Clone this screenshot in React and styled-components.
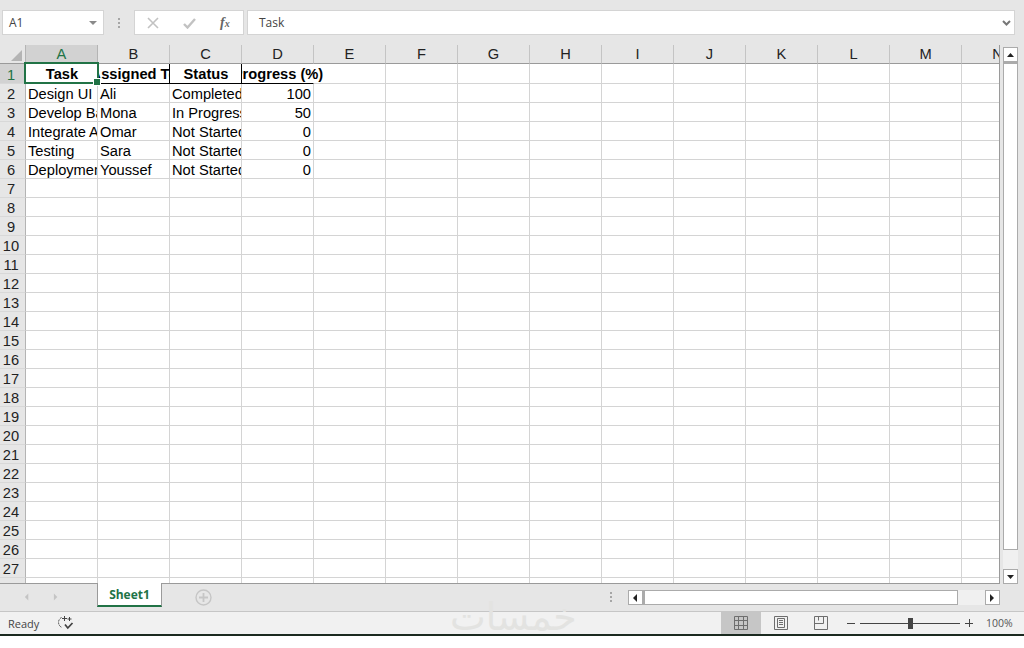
import React from 'react';
import styled, { createGlobalStyle } from 'styled-components';

const GlobalStyle = createGlobalStyle`
  html, body {
    margin: 0;
    padding: 0;
    background: #fff;
    overflow: hidden;
  }
  * { box-sizing: border-box; }
`;

const Window = styled.div`
  position: relative;
  width: 1024px;
  height: 648px;
  display: flex;
  flex-direction: column;
  background: #fff;
  font-family: "Liberation Sans", Arial, sans-serif;
`;

/* formula bar */
const FormulaBar = styled.div`
  height: 45px;
  flex: none;
  display: flex;
  padding: 10px 9px 10px 2px;
  background: #e6e6e6;
  font-family: "Open Sans", sans-serif;
  font-size: 12px;
  color: #444;
`;

const BarBox = styled.div`
  height: 25px;
  display: flex;
  align-items: center;
  background: #fff;
  border: 1px solid #d4d4d4;
`;

const NameBox = styled(BarBox)`
  width: 102px;
  justify-content: space-between;
  padding: 0 6px 0 6px;
`;

const Grip = styled.div`
  width: 30px;
  display: flex;
  align-items: center;
  justify-content: center;
`;

const FxBox = styled(BarBox)`
  width: 110px;
  margin-right: 3px;
  padding-left: 12px;
`;

const FxButton = styled.div`
  width: 36px;
  display: flex;
  align-items: center;
`;

const FxLabel = styled.span`
  font-family: "Liberation Serif", serif;
  font-style: italic;
  font-weight: 700;
  font-size: 14px;
  color: #666;
  margin-left: 1px;

  small {
    font-size: 10px;
  }
`;

const FormulaInput = styled(BarBox)`
  flex: 1;
  justify-content: space-between;
  padding: 0 3px 0 11px;
`;

/* sheet */
const SheetRow = styled.div`
  height: 539px;
  flex: none;
  display: flex;
  background: #e6e6e6;
`;

const Sheet = styled.div`
  width: 1000px;
  height: 539px;
  overflow: hidden;
  display: grid;
  grid-template-columns: 26px repeat(14, 72px);
  grid-template-rows: 19px 20px repeat(27, 19px);
  align-content: start;
  background: #fff;
  border-right: 1px solid #9a9a9a;
  border-bottom: 1px solid #9a9a9a;
  font-size: 14.67px;
  color: #000;
`;

const Corner = styled.div`
  background: #e6e6e6;
  border-right: 1px solid #b4b4b4;
  border-bottom: 1px solid #9a9a9a;
  display: flex;
  align-items: flex-end;
  justify-content: flex-end;
  padding: 0 3px 2px 0;
`;

const ColHead = styled.div`
  background: ${p => (p.$active ? '#d2d2d2' : '#e6e6e6')};
  color: ${p => (p.$active ? '#217346' : '#222')};
  border-right: 1px solid ${p => (p.$active ? '#b4b4b4' : '#c4c4c4')};
  border-bottom: 1px solid #9a9a9a;
  display: flex;
  align-items: center;
  justify-content: center;
  white-space: nowrap;
`;

const RowHead = styled.div`
  background: ${p => (p.$active ? '#d2d2d2' : '#e6e6e6')};
  color: ${p => (p.$active ? '#217346' : '#222')};
  border-right: 1px solid #b4b4b4;
  border-bottom: 1px solid #d8d8d8;
  display: flex;
  align-items: center;
  justify-content: center;
  padding: 2px 3px 0 0;
  overflow: hidden;
`;

const Cell = styled.div`
  display: flex;
  align-items: center;
  justify-content: ${p => (p.$head ? 'center' : p.$right ? 'flex-end' : 'flex-start')};
  padding: 0 2px;
  white-space: nowrap;
  overflow: ${p => (p.$spill ? 'visible' : 'hidden')};
  clip-path: ${p => (p.$spill ? 'inset(0 -60px 0 0)' : 'none')};
  font-weight: ${p => (p.$head ? 700 : 400)};
  border-right: 1px solid ${p => (p.$spill ? 'transparent' : p.$head ? '#000' : '#d4d4d4')};
  border-bottom: 1px solid ${p => (p.$head ? '#000' : '#d4d4d4')};
`;

const CellText = styled.span`
  flex: none;
  padding-left: ${p => (p.$head ? 1 : 0)}px;
  padding-top: ${p => (p.$head ? 0 : 1)}px;
`;

const Selection = styled.div`
  position: absolute;
  left: 24px;
  top: 62px;
  width: 75px;
  height: 22px;
  border: 2px solid #217346;
  pointer-events: none;

  &::after {
    content: '';
    position: absolute;
    right: -4px;
    bottom: -4px;
    width: 6px;
    height: 6px;
    background: #217346;
    border: 1px solid #fff;
  }
`;

/* vertical scrollbar */
const VScroll = styled.div`
  flex: 1;
  display: flex;
  flex-direction: column;
  padding: 2px 6px 0 3px;
`;

const ScrollButton = styled.div`
  width: 15px;
  height: 15px;
  flex: none;
  display: flex;
  align-items: center;
  justify-content: center;
  background: #fff;
  border: 1px solid #ababab;
`;

const VThumb = styled.div`
  height: 488px;
  flex: none;
  background: #fff;
  border: 1px solid #ababab;
  border-top-width: 2px;
`;

const VTrack = styled.div`
  flex: 1;
  background: #f0f0f0;
`;

/* tabs */
const TabBar = styled.div`
  height: 28px;
  flex: none;
  display: flex;
  background: #e6e6e6;
  border-bottom: 1px solid #c6c6c6;
`;

const TabNav = styled.div`
  width: 97px;
  flex: none;
  display: flex;
  align-items: center;
  padding: 0 0 2px 24px;
  gap: 23px;
`;

const Tab = styled.div`
  width: 65px;
  height: 24px;
  margin-top: -1px;
  flex: none;
  display: flex;
  align-items: center;
  justify-content: center;
  background: #fff;
  border-left: 1px solid #9a9a9a;
  border-right: 1px solid #9a9a9a;
  border-bottom: 2px solid #217346;
  color: #217346;
  font-family: "Open Sans", sans-serif;
  font-size: 12px;
  font-weight: 700;
`;

const AddSheet = styled.div`
  margin-left: 33px;
  display: flex;
  align-items: center;
  padding-bottom: 1px;
`;

const TabSplit = styled.div`
  margin-left: 391px;
  width: 16px;
  display: flex;
  align-items: center;
  justify-content: center;
  padding-bottom: 1px;
`;

const HScroll = styled.div`
  margin-left: 9px;
  width: 372px;
  height: 15px;
  margin-top: 6px;
  display: flex;
`;

const HThumb = styled.div`
  width: 315px;
  flex: none;
  background: #fff;
  border: 1px solid #ababab;
  border-left-width: 2px;
`;

const HTrack = styled.div`
  flex: 1;
  background: #f0f0f0;
`;

/* status bar */
const StatusBar = styled.div`
  position: relative;
  height: 22px;
  flex: none;
  display: flex;
  align-items: center;
  background: #f1f1f1;
  font-family: "Open Sans", sans-serif;
  font-size: 11px;
  color: #444;
`;

const Ready = styled.span`
  margin-left: 8px;
  width: 49px;
`;

const Watermark = styled.span`
  position: absolute;
  left: 450px;
  top: -12px;
  height: 34px;
  overflow: hidden;
  font-family: "DejaVu Sans", sans-serif;
  font-size: 38px;
  line-height: 34px;
  color: #e3e3e1;
`;

const Views = styled.div`
  margin-left: auto;
  display: flex;
  align-items: stretch;
  height: 22px;
`;

const ViewButton = styled.div`
  width: 40px;
  display: flex;
  align-items: center;
  justify-content: center;
  padding-bottom: 1px;
  background: ${p => (p.$active ? '#c6c6c6' : 'transparent')};
`;

const Zoomer = styled.div`
  display: flex;
  align-items: center;
  margin-left: 6px;
  gap: 5px;
`;

const Slider = styled.div`
  position: relative;
  width: 100px;
  height: 1px;
  background: #444;
`;

const SliderKnob = styled.div`
  position: absolute;
  left: 48px;
  top: -5px;
  width: 5px;
  height: 11px;
  background: #444;
`;

const ZoomValue = styled.span`
  width: 38px;
  margin-left: 13px;
  font-size: 10.5px;
  color: #555;
`;

const BottomEdge = styled.div`
  height: 2px;
  flex: none;
  background: #1b2a20;
`;

const columns = ['A', 'B', 'C', 'D', 'E', 'F', 'G', 'H', 'I', 'J', 'K', 'L', 'M', 'N'];

const header = ['Task', 'Assigned To', 'Status', 'Progress (%)'];

const rows = [
  ['Design UI', 'Ali', 'Completed', 100],
  ['Develop Backend', 'Mona', 'In Progress', 50],
  ['Integrate API', 'Omar', 'Not Started', 0],
  ['Testing', 'Sara', 'Not Started', 0],
  ['Deployment', 'Youssef', 'Not Started', 0],
];

const Triangle = ({ dir, color = '#222', size = 7 }) => {
  const points = {
    up: '0,6 7,6 3.5,2',
    down: '0,2 7,2 3.5,6',
    left: '5,0 5,8 1,4',
    right: '1,0 1,8 5,4',
  };
  return (
    <svg width={size} height={8} viewBox="0 0 7 8">
      <polygon points={points[dir]} fill={color} />
    </svg>
  );
};

const Dots = () => (
  <svg width="2" height="10" viewBox="0 0 2 10">
    <rect x="0" y="0" width="2" height="2" fill="#a6a6a6" />
    <rect x="0" y="4" width="2" height="2" fill="#a6a6a6" />
    <rect x="0" y="8" width="2" height="2" fill="#a6a6a6" />
  </svg>
);

const MacroIcon = () => (
  <svg width="17" height="16" viewBox="0 0 17 16" fill="none" stroke="#444" strokeWidth="1">
    <path d="M4.5 2.5A5.5 5.5 0 0 0 5 12.5" strokeDasharray="2 1" />
    <path d="M7.5 1v5M5 3.5h5M12.5 2v4M10.5 4h4" />
    <path d="M8 9.5l2.8 3.5 4.7-5" strokeWidth="1.8" />
  </svg>
);

export default function App() {
  const cells = [];
  for (let r = 1; r <= 28; r++) {
    cells.push(<RowHead key={`h${r}`} $active={r === 1}>{r}</RowHead>);
    columns.forEach((c, i) => {
      let content = null;
      let props = {};
      if (r === 1 && i < 4) {
        content = header[i];
        props = { $head: true, $spill: i === 3 };
      } else if (r >= 2 && r <= 6 && i < 4) {
        content = rows[r - 2][i];
        props = { $right: i === 3 };
      }
      cells.push(
        <Cell key={`${c}${r}`} {...props}>
          {content !== null && <CellText $head={props.$head}>{content}</CellText>}
        </Cell>
      );
    });
  }

  return (
    <Window>
      <GlobalStyle />
      <FormulaBar>
        <NameBox>
          <span>A1</span>
          <svg width="8" height="4" viewBox="0 0 8 4"><polygon points="0,0 8,0 4,4" fill="#8a8a8a" /></svg>
        </NameBox>
        <Grip><Dots /></Grip>
        <FxBox>
          <FxButton>
            <svg width="12" height="12" viewBox="0 0 12 12" stroke="#c2c2c2" strokeWidth="1.6" fill="none">
              <path d="M1 1l10 10M11 1L1 11" />
            </svg>
          </FxButton>
          <FxButton>
            <svg width="13" height="12" viewBox="0 0 13 12" stroke="#c2c2c2" strokeWidth="2.4" fill="none">
              <path d="M1 7l3.5 3.5L12 2" />
            </svg>
          </FxButton>
          <FxLabel>f<small>x</small></FxLabel>
        </FxBox>
        <FormulaInput>
          <span>Task</span>
          <svg width="9" height="6" viewBox="0 0 9 6" stroke="#777" strokeWidth="2" fill="none">
            <path d="M1 1l3.5 3.5L8 1" />
          </svg>
        </FormulaInput>
      </FormulaBar>

      <SheetRow>
        <Sheet>
          <Corner>
            <svg width="11" height="11" viewBox="0 0 11 11"><polygon points="11,0 11,11 0,11" fill="#b4b4b4" /></svg>
          </Corner>
          {columns.map((c, i) => (
            <ColHead key={c} $active={i === 0}>{c}</ColHead>
          ))}
          {cells}
        </Sheet>
        <VScroll>
          <ScrollButton><Triangle dir="up" /></ScrollButton>
          <VThumb />
          <VTrack />
          <ScrollButton><Triangle dir="down" /></ScrollButton>
        </VScroll>
      </SheetRow>
      <Selection />

      <TabBar>
        <TabNav>
          <Triangle dir="left" color="#c4c4c4" size={6} />
          <Triangle dir="right" color="#c4c4c4" size={6} />
        </TabNav>
        <Tab>Sheet1</Tab>
        <AddSheet>
          <svg width="17" height="17" viewBox="0 0 17 17" fill="none" stroke="#c6c6c6" strokeWidth="1.4">
            <circle cx="8.5" cy="8.5" r="7.5" />
            <path d="M8.5 4v9M4 8.5h9" strokeWidth="1.8" />
          </svg>
        </AddSheet>
        <TabSplit><Dots /></TabSplit>
        <HScroll>
          <ScrollButton><Triangle dir="left" /></ScrollButton>
          <HThumb />
          <HTrack />
          <ScrollButton><Triangle dir="right" /></ScrollButton>
        </HScroll>
      </TabBar>

      <StatusBar>
        <Ready>Ready</Ready>
        <MacroIcon />
        <Watermark dir="rtl">خمسات</Watermark>
        <Views>
          <ViewButton $active>
            <svg width="14" height="14" viewBox="0 0 14 14" fill="none" stroke="#6e6e6e">
              <path d="M.5.5h13v13H.5zM.5 4.5h13M.5 9.5h13M4.5.5v13M9.5.5v13" />
            </svg>
          </ViewButton>
          <ViewButton>
            <svg width="14" height="14" viewBox="0 0 14 14" fill="none" stroke="#6e6e6e">
              <path d="M.5.5h13v13H.5zM3.5 2.5h7v9h-7zM5 4.5h4M5 6.5h4M5 8.5h4" />
            </svg>
          </ViewButton>
          <ViewButton>
            <svg width="14" height="14" viewBox="0 0 14 14" fill="none" stroke="#6e6e6e">
              <path d="M.5.5h13v13H.5zM.5 7.5h9V.5M4.5.5v4" />
            </svg>
          </ViewButton>
        </Views>
        <Zoomer>
          <svg width="8" height="8" viewBox="0 0 8 8" stroke="#444"><path d="M0 4.5h8" /></svg>
          <Slider><SliderKnob /></Slider>
          <svg width="8" height="8" viewBox="0 0 8 8" stroke="#444"><path d="M0 4.5h8M4.5 0v8" /></svg>
        </Zoomer>
        <ZoomValue>100%</ZoomValue>
      </StatusBar>
      <BottomEdge />
    </Window>
  );
}
